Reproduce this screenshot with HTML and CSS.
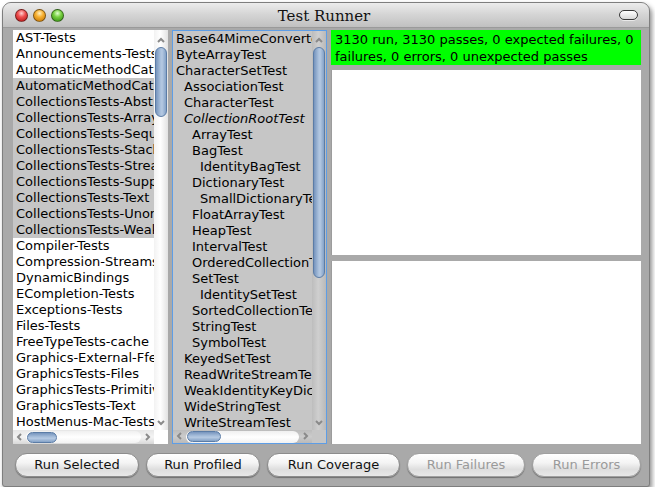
FILE: index.html
```html
<!DOCTYPE html>
<html>
<head>
<meta charset="utf-8">
<title>Test Runner</title>
<link rel="stylesheet" href="styles.css">
</head>
<body>
<div class="window">
  <div class="titlebar">
    <div class="lights">
      <span class="light red"></span>
      <span class="light orange"></span>
      <span class="light green"></span>
    </div>
    <div class="title">Test Runner</div>
    <span class="collapse"></span>
  </div>
  <div class="content">
    <div class="panes">
      <div class="pane left">
        <ul class="rows">
          <li>AST-Tests</li>
          <li>Announcements-Tests</li>
          <li>AutomaticMethodCat</li>
          <li class="sel">AutomaticMethodCat</li>
          <li class="sel">CollectionsTests-Abst</li>
          <li class="sel">CollectionsTests-Array</li>
          <li class="sel">CollectionsTests-Sequ</li>
          <li class="sel">CollectionsTests-Stack</li>
          <li class="sel">CollectionsTests-Strea</li>
          <li class="sel">CollectionsTests-Supp</li>
          <li class="sel">CollectionsTests-Text</li>
          <li class="sel">CollectionsTests-Unor</li>
          <li class="sel">CollectionsTests-Weak</li>
          <li>Compiler-Tests</li>
          <li>Compression-Streams</li>
          <li>DynamicBindings</li>
          <li>ECompletion-Tests</li>
          <li>Exceptions-Tests</li>
          <li>Files-Tests</li>
          <li>FreeTypeTests-cache</li>
          <li>Graphics-External-Ffe</li>
          <li>GraphicsTests-Files</li>
          <li>GraphicsTests-Primitiv</li>
          <li>GraphicsTests-Text</li>
          <li>HostMenus-Mac-Tests</li>
        </ul>
        <div class="vscroll">
          <svg class="arr" width="14" height="17" viewBox="0 0 14 17"><polyline points="4,12 7,9 10,12" fill="none" stroke="#8a8a8a" stroke-width="2"/></svg>
          <div class="vthumb short"></div>
          <div class="spacer"></div>
          <svg class="arr" width="14" height="14" viewBox="0 0 14 14"><polyline points="4,5 7,8 10,5" fill="none" stroke="#8a8a8a" stroke-width="2"/></svg>
        </div>
        <div class="hscroll">
          <svg class="harr" width="13" height="14" viewBox="0 0 13 14"><polyline points="8,4 5,7 8,10" fill="none" stroke="#8a8a8a" stroke-width="2"/></svg>
          <div class="htrack"><div class="hthumb"></div></div>
          <svg class="harr" width="13" height="14" viewBox="0 0 13 14"><polyline points="5,4 8,7 5,10" fill="none" stroke="#8a8a8a" stroke-width="2"/></svg>
        </div>
        <div class="corner"></div>
      </div>

      <div class="pane mid">
        <ul class="rows">
          <li>Base64MimeConverte</li>
          <li>ByteArrayTest</li>
          <li>CharacterSetTest</li>
          <li class="l1">AssociationTest</li>
          <li class="l1">CharacterTest</li>
          <li class="l1 abstract">CollectionRootTest</li>
          <li class="l2">ArrayTest</li>
          <li class="l2">BagTest</li>
          <li class="l3">IdentityBagTest</li>
          <li class="l2">DictionaryTest</li>
          <li class="l3">SmallDictionaryTe</li>
          <li class="l2">FloatArrayTest</li>
          <li class="l2">HeapTest</li>
          <li class="l2">IntervalTest</li>
          <li class="l2">OrderedCollectionT</li>
          <li class="l2">SetTest</li>
          <li class="l3">IdentitySetTest</li>
          <li class="l2">SortedCollectionTe</li>
          <li class="l2">StringTest</li>
          <li class="l2">SymbolTest</li>
          <li class="l1">KeyedSetTest</li>
          <li class="l1">ReadWriteStreamTe</li>
          <li class="l1">WeakIdentityKeyDic</li>
          <li class="l1">WideStringTest</li>
          <li class="l1">WriteStreamTest</li>
        </ul>
        <div class="vscroll">
          <svg class="arr" width="14" height="16" viewBox="0 0 14 16"><polyline points="4,11 7,8 10,11" fill="none" stroke="#8a8a8a" stroke-width="2"/></svg>
          <div class="vthumb long"></div>
          <div class="spacer"></div>
          <svg class="arr" width="14" height="14" viewBox="0 0 14 14"><polyline points="4,5 7,8 10,5" fill="none" stroke="#8a8a8a" stroke-width="2"/></svg>
        </div>
        <div class="hscroll">
          <svg class="harr" width="13" height="13" viewBox="0 0 13 13"><polyline points="8,3 5,6 8,9" fill="none" stroke="#8a8a8a" stroke-width="2"/></svg>
          <div class="htrack"><div class="hthumb wide"></div></div>
          <svg class="harr" width="13" height="13" viewBox="0 0 13 13"><polyline points="5,3 8,6 5,9" fill="none" stroke="#8a8a8a" stroke-width="2"/></svg>
        </div>
        <div class="corner"></div>
      </div>

      <div class="right">
        <div class="status">3130 run, 3130 passes, 0 expected failures, 0 failures, 0 errors, 0 unexpected passes</div>
        <div class="box"></div>
        <div class="box"></div>
      </div>
    </div>

    <div class="buttons">
      <button class="btn">Run Selected</button>
      <button class="btn">Run Profiled</button>
      <button class="btn">Run Coverage</button>
      <button class="btn disabled">Run Failures</button>
      <button class="btn disabled">Run Errors</button>
    </div>
  </div>
</div>
</body>
</html>
```

FILE: styles.css
```css
* { box-sizing: border-box; }

html, body {
  margin: 0;
  padding: 0;
  background: #ffffff;
}

body {
  font-family: "DejaVu Sans", "Noto Sans", sans-serif;
  font-size: 13px;
  color: #000;
}

.window {
  margin: 2px 0 0 2px;
  width: 648px;
  height: 485px;
  background: #a9a9a9;
  border: 1px solid #7e7e7e;
  border-radius: 9px 9px 3px 3px;
  box-shadow: 2px 3px 5px rgba(0, 0, 0, 0.45);
  overflow: hidden;
  display: flex;
  flex-direction: column;
}

/* ---------- title bar ---------- */
.titlebar {
  height: 25px;
  flex: none;
  display: flex;
  align-items: center;
  position: relative;
  background: linear-gradient(to bottom, #ececec 0%, #d6d6d6 45%, #c0c0c0 100%);
  border-bottom: 1px solid #9a9a9a;
  padding: 0 10px 0 12px;
}

.lights {
  display: flex;
  gap: 5px;
}

.light {
  width: 13px;
  height: 13px;
  border-radius: 50%;
  border: 1px solid rgba(0, 0, 0, 0.45);
  display: block;
}
.light.red {
  background: radial-gradient(circle at 50% 30%, #ffd0d0 0%, #f05050 40%, #b01010 100%);
}
.light.orange {
  background: radial-gradient(circle at 50% 30%, #fff0c0 0%, #f7b030 40%, #c07000 100%);
}
.light.green {
  background: radial-gradient(circle at 50% 30%, #e0ffd0 0%, #78d040 40%, #2f8a10 100%);
}

.title {
  position: absolute;
  left: 0;
  right: 4px;
  top: 0;
  height: 25px;
  line-height: 26px;
  text-align: center;
  font-family: "DejaVu Serif", "Liberation Serif", serif;
  font-size: 15px;
  color: #111;
  pointer-events: none;
}

.collapse {
  margin-left: auto;
  width: 19px;
  height: 10px;
  border-radius: 5px;
  border: 1px solid #3a3a3a;
  background: linear-gradient(to bottom, #ffffff, #d8d8d8);
  box-shadow: 0 1px 0 rgba(255, 255, 255, 0.6);
  position: relative;
  z-index: 1;
  margin-right: 1px;
}

/* ---------- content ---------- */
.content {
  flex: 1;
  padding: 2px 8px 0 10px;
  display: flex;
  flex-direction: column;
}

.panes {
  display: grid;
  grid-template-columns: 155px 155px 310px;
  column-gap: 4px;
  height: 414px;
}

.pane {
  display: grid;
  grid-template-columns: 1fr 14px;
  grid-template-rows: 400px 14px;
  overflow: hidden;
}

.pane.left {
  background: #ffffff;
}

.pane.mid {
  background: #c6c6c6;
  border: 1px solid #5d9de6;
  grid-template-rows: 399px 13px;
}

.rows {
  list-style: none;
  margin: 0;
  padding: 0;
  overflow: hidden;
  min-width: 0;
}

.rows li {
  height: 16px;
  line-height: 16px;
  padding-left: 3px;
  white-space: nowrap;
  overflow: hidden;
  text-overflow: clip;
}

.pane.left .rows li.sel {
  background: #c6c6c6;
}

.pane.mid .rows li { padding-left: 3px; }
.pane.mid .rows li.l1 { padding-left: 11px; }
.pane.mid .rows li.l2 { padding-left: 19px; }
.pane.mid .rows li.l3 { padding-left: 27px; }
.pane.mid .rows li.abstract { font-style: italic; }

/* vertical scrollbar */
.vscroll {
  display: flex;
  flex-direction: column;
  align-items: center;
  background: linear-gradient(to right, #f2f2f2 0%, #ffffff 45%, #e2e2e2 100%);
}

.pane.mid .vscroll {
  background: linear-gradient(to right, #bdbdbd 0%, #cfcfcf 45%, #b9b9b9 100%);
}

.arr { display: block; flex: none; }

.vthumb {
  width: 12px;
  flex: none;
  border-radius: 6px;
  border: 1px solid #5b7ca6;
  background: linear-gradient(to right, #7694bd 0%, #a9c0dc 45%, #b5c9e2 60%, #84a2c7 100%);
}
.vthumb.short { height: 70px; }
.vthumb.long { height: 231px; }

.spacer { flex: 1; }

/* horizontal scrollbar */
.hscroll {
  display: flex;
  align-items: center;
  background: linear-gradient(to bottom, #e6e6e6 0%, #f4f4f4 50%, #d8d8d8 100%);
}

.pane.mid .hscroll {
  background: linear-gradient(to bottom, #bcbcbc 0%, #cbcbcb 50%, #bababa 100%);
}

.harr { display: block; flex: none; }

.htrack {
  flex: 1;
  height: 12px;
  border-radius: 6px;
  background: linear-gradient(to bottom, #f0f0f0 0%, #ffffff 50%, #f2f2f2 100%);
  display: flex;
  align-items: center;
  padding-left: 1px;
}

.hthumb {
  width: 30px;
  height: 11px;
  border-radius: 6px;
  border: 1px solid #5b7ca6;
  background: linear-gradient(to bottom, #7694bd 0%, #a9c0dc 45%, #b5c9e2 60%, #84a2c7 100%);
}
.hthumb.wide { width: 34px; }

.corner { background: #ffffff; }
.pane.mid .corner { background: #c6c6c6; }

/* right side */
.right {
  display: flex;
  flex-direction: column;
}

.status {
  height: 35px;
  flex: none;
  background: #00ff00;
  padding: 1px 4px 0 4px;
  line-height: 17px;
  font-size: 13px;
}

.box {
  background: #ffffff;
  border-left: 1px solid #9c9c9c;
}

.box:nth-child(2) {
  margin-top: 5px;
  height: 185px;
  flex: none;
}

.box:nth-child(3) {
  margin-top: 6px;
  flex: 1;
}

/* buttons */
.buttons {
  margin-top: 9px;
  display: grid;
  grid-template-columns: 124px 114px 133px 118px 109px;
  column-gap: 7px;
  padding-left: 2px;
}

.btn {
  height: 24px;
  border-radius: 12px;
  border: 1px solid #8c8c8c;
  background: linear-gradient(to bottom, #ffffff 0%, #f4f4f4 40%, #dedede 70%, #e8e8e8 100%);
  box-shadow: 0 1px 1px rgba(0, 0, 0, 0.35);
  font-family: "DejaVu Sans", "Noto Sans", sans-serif;
  font-size: 13px;
  color: #111;
  padding: 0;
  line-height: 20px;
}

.btn.disabled {
  color: #9a9a9a;
  border-color: #a0a0a0;
}
```
